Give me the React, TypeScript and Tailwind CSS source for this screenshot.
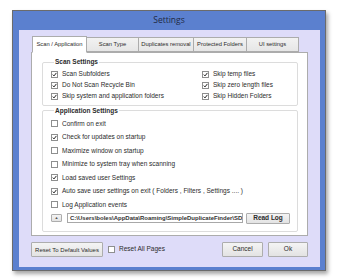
import React from "react";

const TABS = ["Scan / Application", "Scan Type", "Duplicates removal", "Protected Folders", "UI  settings"];
const TAB_WIDTHS = ["w-[55px]", "w-[53px]", "w-[56px]", "w-[54px]", "w-[53px]"];

const APP_ROWS: [string, boolean][] = [
  ["Confirm on exit", false],
  ["Check for updates on startup", true],
  ["Maximize window on startup", false],
  ["Minimize to system tray when scanning", false],
  ["Load saved user Settings", true],
  ["Auto save user settings on exit ( Folders , Filters , Settings  .... )", true],
  ["Log Application events", false],
];

function Box({ checked }: { checked: boolean }) {
  return (
    <span className="w-[7px] h-[7px] shrink-0 border border-[#8e8f8f] bg-white flex items-center justify-center">
      {checked && (
        <svg width="5" height="5" viewBox="0 0 10 10">
          <path d="M1.5 5.2 L4 7.8 L8.8 1.8" fill="none" stroke="#222" strokeWidth="2" />
        </svg>
      )}
    </span>
  );
}

function Check({ label, checked, className = "" }: { label: string; checked: boolean; className?: string }) {
  return (
    <div className={`flex items-center gap-[4px] whitespace-nowrap ${className}`}>
      <Box checked={checked} />
      <span>{label}</span>
    </div>
  );
}

function Btn({ children, className = "" }: { children: React.ReactNode; className?: string }) {
  return (
    <div
      className={`flex items-center justify-center shrink-0 border border-[#adadad] bg-gradient-to-b from-[#f4f4f4] to-[#e3e3e3] rounded-[1px] ${className}`}
    >
      {children}
    </div>
  );
}

export default function App() {
  return (
    <div
      className="w-[340px] h-[280px] bg-white pt-[10px] pl-[12px] text-[6.5px] leading-none text-[#2b2b2b]"
      style={{ fontFamily: '"Liberation Sans", Arial, sans-serif' }}
    >
      <div className="w-[314px] h-[261px] border border-[#6b6b6b] bg-[#5b80cf] flex flex-col shadow-[2px_3px_4px_rgba(0,0,0,0.35)]">
        <div className="h-[19px] flex items-center justify-center text-[8.5px] text-[#1f2a44]" style={{ fontFamily: '"Open Sans", "Liberation Sans", sans-serif' }}>
          Settings
        </div>
        <div className="flex-1 ml-[6px] mr-[5px] mb-[3px] bg-[#dedcf9] flex flex-col pl-[12px] pr-[12px] pt-[6px]">
          <div className="flex items-end pl-[1px] h-[16px] text-[5.8px]">
            {TABS.map((t, i) => (
              <div
                key={t}
                className={`${TAB_WIDTHS[i]} flex items-center justify-center border border-[#acacac] -ml-px first:ml-0 ${
                  i === 0 ? "h-[17px] bg-white border-b-white relative z-10 -mb-px" : "h-[15px] bg-gradient-to-b from-[#f2f2f2] to-[#e6e6e6]"
                }`}
              >
                {t}
              </div>
            ))}
          </div>
          <div className="h-[184px] bg-white border border-[#acacac] pl-[10px] pr-[9px] pt-[6px]">
            <fieldset className="border border-[#dcdcdc] rounded-[2px] pl-[8px] pr-[8px] pt-[3px] pb-[3px]">
              <legend className="ml-[3px] px-[1px] font-bold text-[6.5px]">Scan Settings</legend>
              <div className="flex">
                <div className="flex-1 flex flex-col">
                  <Check className="h-[11px]" label="Scan Subfolders" checked />
                  <Check className="h-[11px]" label="Do Not Scan Recycle Bin" checked />
                  <Check className="h-[11px]" label="Skip system and application folders" checked />
                </div>
                <div className="w-[87px] flex flex-col">
                  <Check className="h-[11px]" label="Skip temp files" checked />
                  <Check className="h-[11px]" label="Skip zero length files" checked />
                  <Check className="h-[11px]" label="Skip Hidden Folders" checked />
                </div>
              </div>
            </fieldset>
            <fieldset className="mt-[2px] border border-[#dcdcdc] rounded-[2px] pl-[8px] pr-[6px] pt-[3px] pb-[6px]">
              <legend className="ml-[3px] px-[1px] font-bold text-[6.5px]">Application Settings</legend>
              {APP_ROWS.map(([l, c]) => (
                <Check key={l} className="h-[13.5px]" label={l} checked={c} />
              ))}
              <div className="h-[13px] flex items-center">
                <Btn className="w-[11px] h-[8px] text-[4px] text-[#555]">▲</Btn>
                <div className="ml-[5px] w-[176px] shrink-0 h-[10px] border border-[#a8a8a8] flex items-center px-[2px] overflow-hidden whitespace-nowrap font-bold text-[6px] text-[#333]">
                  C:\Users\boles\AppData\Roaming\SimpleDuplicateFinder\SDF
                </div>
                <Btn className="ml-[3px] w-[44px] h-[11px] font-bold text-[6.5px]">Read Log</Btn>
              </div>
            </fieldset>
          </div>
          <div className="flex items-center mt-[6px]">
            <Btn className="w-[72px] h-[15px] text-[6px]">Reset To Default Values</Btn>
            <Check className="ml-[5px]" label="Reset All Pages" checked={false} />
            <Btn className="ml-auto w-[41px] h-[15px]">Cancel</Btn>
            <Btn className="ml-[5px] w-[40px] h-[15px]">Ok</Btn>
          </div>
        </div>
      </div>
    </div>
  );
}
